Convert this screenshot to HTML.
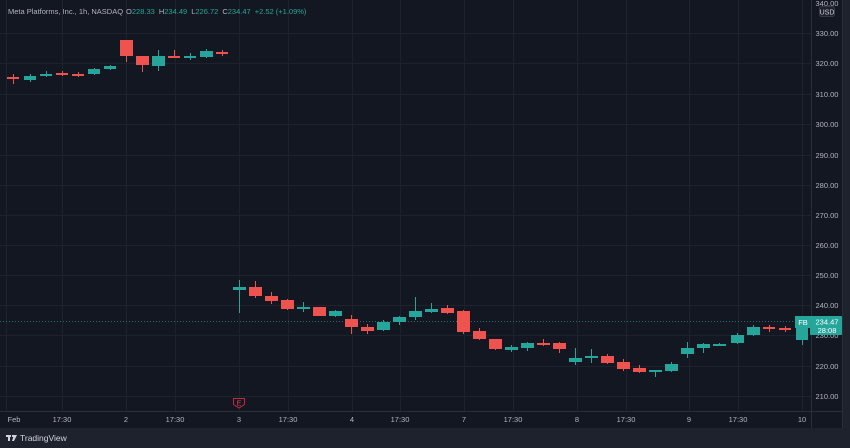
<!DOCTYPE html>
<html><head><meta charset="utf-8"><style>
html,body{margin:0;padding:0;background:#1e222d;}
svg{display:block;font-family:"Liberation Sans",sans-serif;}
</style></head><body>
<svg width="850" height="448" viewBox="0 0 850 448" xmlns="http://www.w3.org/2000/svg">
<rect width="850" height="448" fill="#1e222d"/>
<rect x="0" y="0" width="843" height="428" fill="#131722"/>
<g stroke="#1e222d" stroke-width="1">
<line x1="0" y1="33.5" x2="811" y2="33.5"/><line x1="0" y1="63.5" x2="811" y2="63.5"/>
<line x1="0" y1="94.5" x2="811" y2="94.5"/><line x1="0" y1="124.5" x2="811" y2="124.5"/>
<line x1="0" y1="155.5" x2="811" y2="155.5"/><line x1="0" y1="185.5" x2="811" y2="185.5"/>
<line x1="0" y1="215.5" x2="811" y2="215.5"/><line x1="0" y1="245.5" x2="811" y2="245.5"/>
<line x1="0" y1="275.5" x2="811" y2="275.5"/><line x1="0" y1="305.5" x2="811" y2="305.5"/>
<line x1="0" y1="335.5" x2="811" y2="335.5"/><line x1="0" y1="366.5" x2="811" y2="366.5"/>
<line x1="0" y1="396.5" x2="811" y2="396.5"/>
<line x1="6.5" y1="0" x2="6.5" y2="411"/><line x1="62.5" y1="0" x2="62.5" y2="411"/>
<line x1="126.5" y1="0" x2="126.5" y2="411"/><line x1="175.5" y1="0" x2="175.5" y2="411"/>
<line x1="239.5" y1="0" x2="239.5" y2="411"/><line x1="288.5" y1="0" x2="288.5" y2="411"/>
<line x1="352.5" y1="0" x2="352.5" y2="411"/><line x1="400.5" y1="0" x2="400.5" y2="411"/>
<line x1="464.5" y1="0" x2="464.5" y2="411"/><line x1="513.5" y1="0" x2="513.5" y2="411"/>
<line x1="577.5" y1="0" x2="577.5" y2="411"/><line x1="626.5" y1="0" x2="626.5" y2="411"/>
<line x1="689.5" y1="0" x2="689.5" y2="411"/><line x1="738.5" y1="0" x2="738.5" y2="411"/>
<line x1="802.5" y1="0" x2="802.5" y2="411"/>
</g>
<line x1="811.5" y1="0" x2="811.5" y2="428" stroke="#2a2e39"/>
<line x1="0" y1="411.5" x2="843" y2="411.5" stroke="#2a2e39"/>
<line x1="842.5" y1="0" x2="842.5" y2="428" stroke="#2a2e39"/>
<line x1="0" y1="321.5" x2="811" y2="321.5" stroke="#26a69a" stroke-dasharray="1 2" opacity="0.6"/>
<g>
<g fill="#ef5350"><rect x="13" y="74" width="1" height="10"/><rect x="7" y="77" width="12" height="2"/></g>
<g fill="#26a69a"><rect x="30" y="74" width="1" height="8"/><rect x="24" y="76" width="12" height="4"/></g>
<g fill="#26a69a"><rect x="46" y="71" width="1" height="6"/><rect x="40" y="74" width="12" height="2"/></g>
<g fill="#ef5350"><rect x="62" y="71" width="1" height="5"/><rect x="56" y="73" width="12" height="2"/></g>
<g fill="#ef5350"><rect x="78" y="72" width="1" height="5"/><rect x="72" y="74" width="12" height="2"/></g>
<g fill="#26a69a"><rect x="94" y="68" width="1" height="7"/><rect x="88" y="69" width="12" height="5"/></g>
<g fill="#26a69a"><rect x="110" y="65" width="1" height="5"/><rect x="104" y="66" width="12" height="3"/></g>
<g fill="#ef5350"><rect x="126" y="40" width="1" height="22"/><rect x="120" y="40" width="13" height="16"/></g>
<g fill="#ef5350"><rect x="142" y="56" width="1" height="16"/><rect x="136" y="56" width="13" height="9"/></g>
<g fill="#26a69a"><rect x="158" y="50" width="1" height="21"/><rect x="152" y="56" width="13" height="10"/></g>
<g fill="#ef5350"><rect x="174" y="50" width="1" height="8"/><rect x="168" y="56" width="12" height="2"/></g>
<g fill="#26a69a"><rect x="190" y="53" width="1" height="7"/><rect x="184" y="56" width="12" height="2"/></g>
<g fill="#26a69a"><rect x="206" y="49" width="1" height="9"/><rect x="200" y="51" width="13" height="6"/></g>
<g fill="#ef5350"><rect x="222" y="50" width="1" height="6"/><rect x="216" y="52" width="12" height="2"/></g>
<g fill="#26a69a"><rect x="239" y="280" width="1" height="33"/><rect x="233" y="287" width="13" height="3"/></g>
<g fill="#ef5350"><rect x="255" y="281" width="1" height="17"/><rect x="249" y="287" width="13" height="9"/></g>
<g fill="#ef5350"><rect x="271" y="292" width="1" height="12"/><rect x="265" y="296" width="13" height="5"/></g>
<g fill="#ef5350"><rect x="287" y="299" width="1" height="11"/><rect x="281" y="300" width="13" height="9"/></g>
<g fill="#26a69a"><rect x="303" y="302" width="1" height="10"/><rect x="297" y="307" width="13" height="2"/></g>
<g fill="#ef5350"><rect x="319" y="307" width="1" height="9"/><rect x="313" y="307" width="13" height="9"/></g>
<g fill="#26a69a"><rect x="335" y="310" width="1" height="7"/><rect x="329" y="311" width="13" height="5"/></g>
<g fill="#ef5350"><rect x="351" y="315" width="1" height="19"/><rect x="345" y="319" width="13" height="8"/></g>
<g fill="#ef5350"><rect x="367" y="324" width="1" height="10"/><rect x="361" y="327" width="13" height="4"/></g>
<g fill="#26a69a"><rect x="383" y="320" width="1" height="11"/><rect x="377" y="322" width="13" height="8"/></g>
<g fill="#26a69a"><rect x="399" y="316" width="1" height="9"/><rect x="393" y="317" width="13" height="5"/></g>
<g fill="#26a69a"><rect x="415" y="297" width="1" height="23"/><rect x="409" y="311" width="13" height="6"/></g>
<g fill="#26a69a"><rect x="431" y="303" width="1" height="10"/><rect x="425" y="309" width="13" height="3"/></g>
<g fill="#ef5350"><rect x="447" y="305" width="1" height="9"/><rect x="441" y="308" width="13" height="5"/></g>
<g fill="#ef5350"><rect x="463" y="310" width="1" height="24"/><rect x="457" y="311" width="13" height="21"/></g>
<g fill="#ef5350"><rect x="479" y="328" width="1" height="12"/><rect x="473" y="331" width="13" height="8"/></g>
<g fill="#ef5350"><rect x="495" y="339" width="1" height="11"/><rect x="489" y="339" width="13" height="10"/></g>
<g fill="#26a69a"><rect x="511" y="345" width="1" height="7"/><rect x="505" y="347" width="13" height="3"/></g>
<g fill="#26a69a"><rect x="527" y="342" width="1" height="9"/><rect x="521" y="343" width="13" height="5"/></g>
<g fill="#ef5350"><rect x="543" y="339" width="1" height="7"/><rect x="537" y="343" width="13" height="2"/></g>
<g fill="#ef5350"><rect x="559" y="342" width="1" height="11"/><rect x="553" y="343" width="13" height="6"/></g>
<g fill="#26a69a"><rect x="575" y="348" width="1" height="17"/><rect x="569" y="358" width="13" height="4"/></g>
<g fill="#26a69a"><rect x="591" y="349" width="1" height="14"/><rect x="585" y="356" width="13" height="2"/></g>
<g fill="#ef5350"><rect x="607" y="354" width="1" height="10"/><rect x="601" y="356" width="13" height="7"/></g>
<g fill="#ef5350"><rect x="623" y="359" width="1" height="12"/><rect x="617" y="362" width="13" height="7"/></g>
<g fill="#ef5350"><rect x="639" y="365" width="1" height="8"/><rect x="633" y="368" width="13" height="4"/></g>
<g fill="#26a69a"><rect x="655" y="370" width="1" height="7"/><rect x="649" y="370" width="13" height="2"/></g>
<g fill="#26a69a"><rect x="671" y="362" width="1" height="10"/><rect x="665" y="364" width="13" height="7"/></g>
<g fill="#26a69a"><rect x="687" y="342" width="1" height="16"/><rect x="681" y="348" width="13" height="6"/></g>
<g fill="#26a69a"><rect x="703" y="343" width="1" height="10"/><rect x="697" y="344" width="13" height="4"/></g>
<g fill="#26a69a"><rect x="719" y="343" width="1" height="3"/><rect x="713" y="344" width="13" height="2"/></g>
<g fill="#26a69a"><rect x="737" y="333" width="1" height="11"/><rect x="731" y="335" width="13" height="8"/></g>
<g fill="#26a69a"><rect x="753" y="325" width="1" height="11"/><rect x="747" y="327" width="13" height="8"/></g>
<g fill="#ef5350"><rect x="769" y="325" width="1" height="7"/><rect x="763" y="327" width="12" height="2"/></g>
<g fill="#ef5350"><rect x="785" y="326" width="1" height="6"/><rect x="779" y="328" width="12" height="2"/></g>
<g fill="#26a69a"><rect x="802" y="316" width="1" height="29"/><rect x="796" y="322" width="12" height="18"/></g>
</g>
<path d="M233.5 398.5 h11 v6 l-5.5 3.5 l-5.5 -3.5 z" fill="#131722" stroke="#c1283b" stroke-width="1"/>
<text x="239" y="405.5" font-size="7" fill="#e04050" text-anchor="middle">E</text>
<text x="8" y="14" font-size="7.5" fill="#b2b5be">Meta Platforms, Inc., 1h, NASDAQ<tspan dx="3">O</tspan><tspan fill="#26a69a">228.33</tspan><tspan dx="4">H</tspan><tspan fill="#26a69a">234.49</tspan><tspan dx="4">L</tspan><tspan fill="#26a69a">226.72</tspan><tspan dx="4">C</tspan><tspan fill="#26a69a">234.47</tspan><tspan dx="4" fill="#26a69a">+2.52 (+1.09%)</tspan></text>
<g font-size="7.5" fill="#b2b5be" text-anchor="middle">
<text x="827" y="6">340.00</text>
<text x="827" y="36">330.00</text><text x="827" y="66">320.00</text><text x="827" y="97">310.00</text>
<text x="827" y="127">300.00</text><text x="827" y="158">290.00</text><text x="827" y="188">280.00</text>
<text x="827" y="218">270.00</text><text x="827" y="248">260.00</text><text x="827" y="278">250.00</text>
<text x="827" y="308">240.00</text><text x="827" y="338">230.00</text><text x="827" y="369">220.00</text>
<text x="827" y="399">210.00</text>
</g>
<rect x="819.5" y="6.5" width="15" height="10" rx="2" fill="#1e222d" stroke="#363a45"/>
<text x="827" y="14.5" font-size="7" fill="#d1d4dc" text-anchor="middle">USD</text>
<rect x="795" y="316" width="16" height="12" fill="#26a69a"/>
<text x="803" y="325" font-size="7.5" fill="#ffffff" text-anchor="middle">FB</text>
<rect x="810" y="316" width="32" height="19" rx="1" fill="#26a69a"/>
<text x="827" y="324.5" font-size="7.5" fill="#ffffff" text-anchor="middle">234.47</text>
<text x="827" y="333" font-size="7.5" fill="#ffffff" text-anchor="middle">28:08</text>
<g font-size="7.5" fill="#b2b5be" text-anchor="middle">
<text x="14" y="422">Feb</text><text x="62" y="422">17:30</text><text x="126" y="422">2</text>
<text x="175" y="422">17:30</text><text x="239" y="422">3</text><text x="288" y="422">17:30</text>
<text x="352" y="422">4</text><text x="400" y="422">17:30</text><text x="464" y="422">7</text>
<text x="513" y="422">17:30</text><text x="577" y="422">8</text><text x="626" y="422">17:30</text>
<text x="689" y="422">9</text><text x="738" y="422">17:30</text><text x="802" y="422">10</text>
</g>
<g fill="#d1d4dc">
<rect x="6" y="435" width="5" height="2"/><rect x="8" y="435" width="2" height="6"/>
<rect x="12" y="435" width="2" height="2"/>
<path d="M14 435 h3 l-3 6 h-2 z"/>
</g>
<text x="20" y="441" font-size="8.5" fill="#d1d4dc">TradingView</text>
</svg>
</body></html>
